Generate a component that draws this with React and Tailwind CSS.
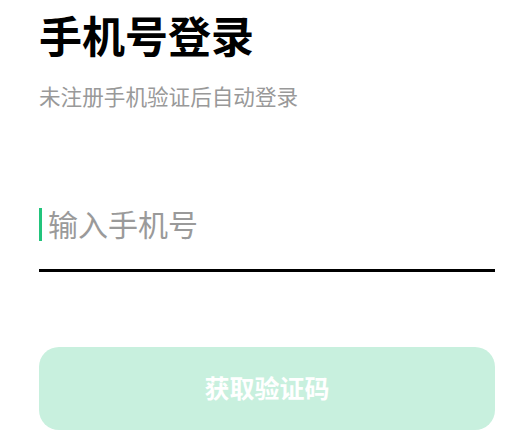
import React, { useState } from "react";

const font = { fontFamily: '"Noto Sans CJK SC", "Noto Sans", sans-serif' };

const App = () => {
  const [phone, setPhone] = useState("");

  return (
    <div className="min-h-[433px] bg-white pl-[39px] pr-[37px] pt-[13px]" style={font}>
      <h1 className="text-[43px] font-bold leading-none text-black">手机号登录</h1>
      <p className="mt-[29px] text-[21.6px] leading-none text-[#999999]">未注册手机验证后自动登录</p>

      <div className="mt-[94px] flex items-center border-b-[3px] border-black pb-[24px]">
        <span className="mt-[4px] h-[33px] w-[3px] bg-[#22c47c]" />
        <input
          className="ml-[6px] w-full bg-transparent text-[30px] leading-none text-black outline-none placeholder:text-[#9a9a9a] caret-transparent"
          type="tel"
          placeholder="输入手机号"
          value={phone}
          onChange={(e) => setPhone(e.target.value)}
        />
      </div>

      <button
        type="button"
        className="mt-[75px] flex h-[83px] w-full items-center justify-center rounded-[20px] bg-[#c8f0de] text-[25px] font-bold text-white"
      >
        获取验证码
      </button>
    </div>
  );
};

export default App;
